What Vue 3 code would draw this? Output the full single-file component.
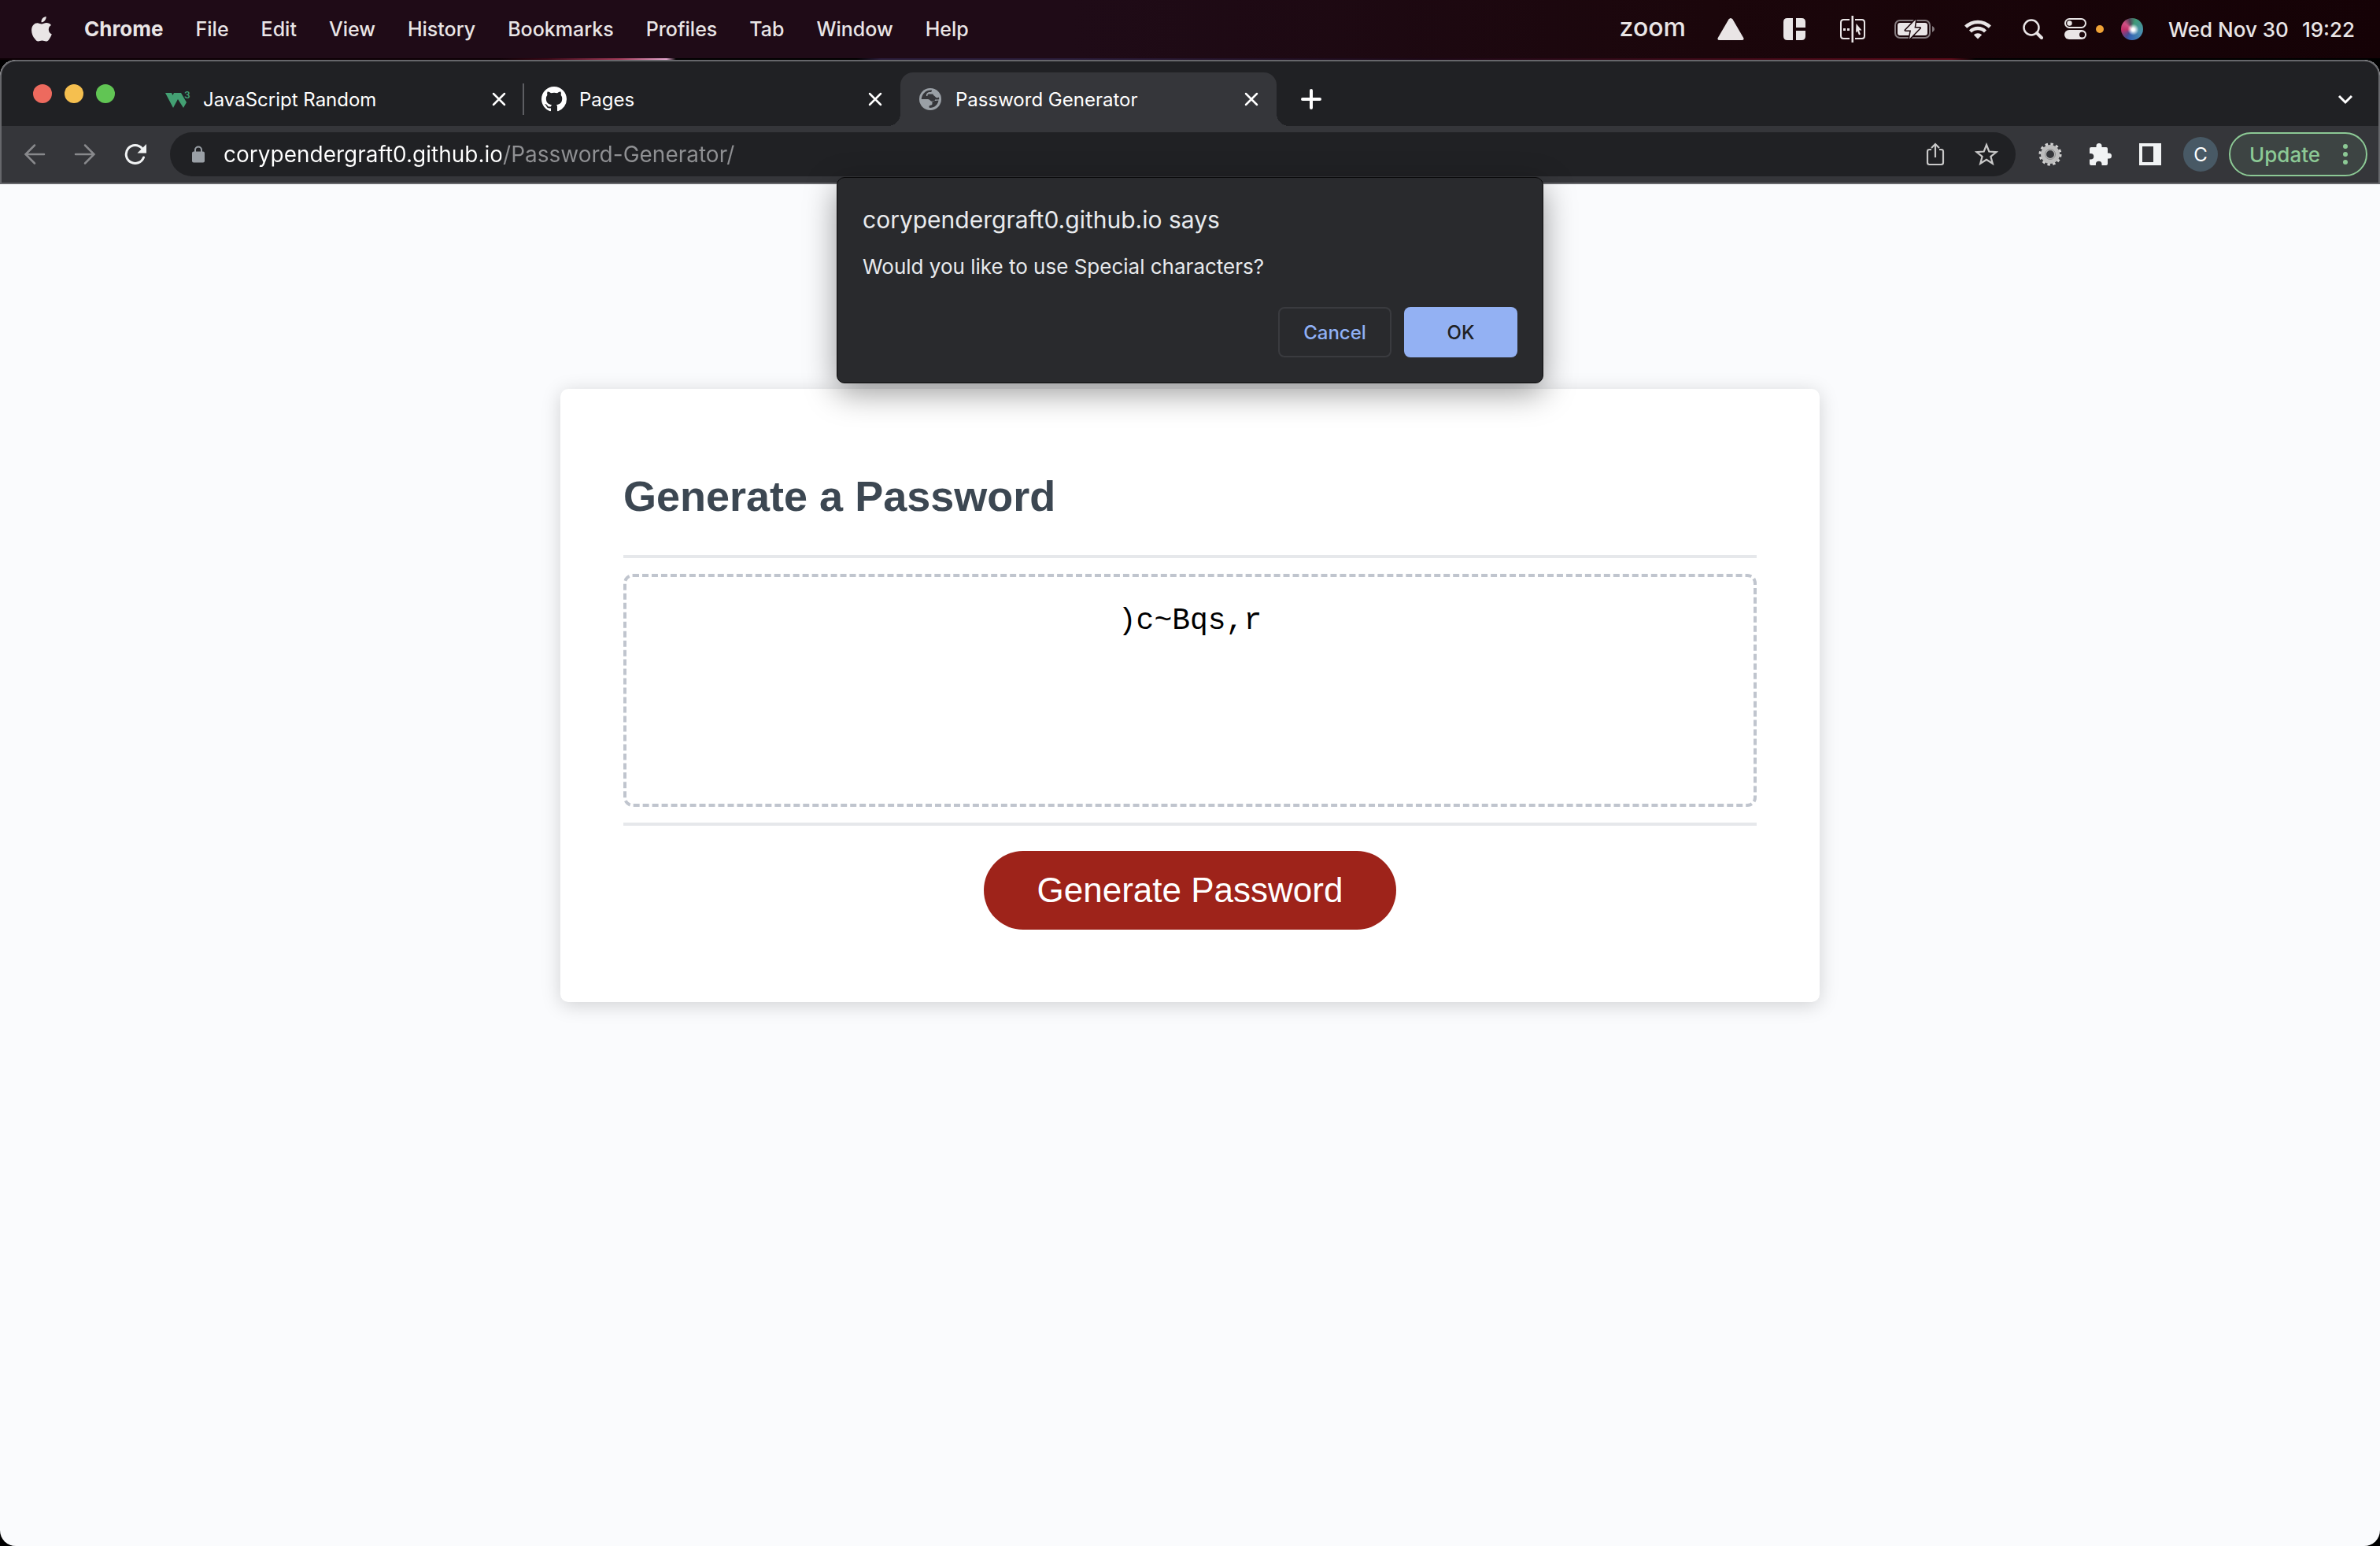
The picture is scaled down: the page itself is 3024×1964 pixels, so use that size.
<script setup>
import { ref } from 'vue'

const menus = ['File', 'Edit', 'View', 'History', 'Bookmarks', 'Profiles', 'Tab', 'Window', 'Help']
const tabs = [
  { id: 'w3', title: 'JavaScript Random' },
  { id: 'github', title: 'Pages' },
  { id: 'globe', title: 'Password Generator', active: true },
]
const address = ref('corypendergraft0.github.io/Password-Generator/')
const password = ref(')c~Bqs,r')
</script>

<template>
  <div class="desktop">
    <header class="menubar">
      <nav class="menus" aria-label="Menu bar">
        <button class="menu" aria-label="Apple menu">
          <svg class="apple" viewBox="0 0 26 32" width="26" height="32">
            <path d="M18.6 0c.3 2-.5 3.9-1.7 5.200-1.200 1.400-2.900 2.200-4.400 2-.2-2 .7-3.900 1.800-5.100C15.400.900 17.200.100 18.600 0zM25 10.900c-2.100 1.300-3.200 3.100-3.200 5.500 0 2.800 1.600 5 4 6-.8 2.300-1.900 4.500-3.400 6.500-1.200 1.700-2.400 2.700-4 2.700-1.700 0-2.700-1-4.900-1s-3.300 1-4.900 1c-1.700 0-2.900-1.200-4.200-3C1.800 25.600.1 21.500.1 17.500c0-5.900 3.600-9.300 7.300-9.300 2.100 0 3.900 1.300 5.600 1.300 1.600 0 3.500-1.400 6.100-1.400 2.300 0 4.400.9 5.900 2.800z" />
          </svg>
        </button>
        <button class="menu app">Chrome</button>
        <button v-for="m in menus" :key="m" class="menu">{{ m }}</button>
      </nav>
      <div class="status">
        <span class="zoom">zoom</span>
        <svg class="drive" viewBox="0 0 34 28" width="34" height="28"><path d="M14.500 1.500Q17-1.500 19.500 1.500L33.200 25Q34.500 28 31 28H3Q-.5 28 .8 25z" /></svg>
        <svg class="tiles" viewBox="0 0 28 28" width="28" height="28"><path d="M5 0h7v28H5q-5 0-5-5V5q0-5 5-5zM16 0h7q5 0 5 5v7H16zM16 16h12v7q0 5-5 5h-7z" /></svg>
        <svg class="split" viewBox="0 0 34 34" width="34" height="34">
          <path d="M13 5H5.500Q2 5 2 8.500v17Q2 29 5.500 29H13M20 5h8.500Q32 5 32 8.500v17Q32 29 28.500 29H20" fill="none" stroke="#e9e5e6" stroke-width="2" />
          <path d="M15.500 0h2.500v34h-2.500zM5 16h3v3H5zM10 16h3v3h-3zM21.500 10l7 8.500h-3.500l2 5-2 1-2-5-2 2z" />
        </svg>
        <svg class="battery" viewBox="0 0 52 26" width="52" height="26">
          <rect x="1" y="2" width="44" height="22" rx="6" fill="none" stroke="#857c7f" stroke-width="2" />
          <path d="M48 9q3 1.500 3 4t-3 4z" fill="#857c7f" />
          <rect x="4" y="5" width="38" height="16" rx="3" />
          <path d="M27 1 14 14.500h7L19 25.500 32.500 11.500H25.500z" stroke="#1a060b" stroke-width="3" stroke-linejoin="round" paint-order="stroke" />
        </svg>
        <svg class="wifi" viewBox="0 0 34 26" width="34" height="26">
          <g fill="none" stroke="#e9e5e6" stroke-width="4.500"><path d="M1.600 10.200a22 22 0 0 1 30.800 0" /><path d="M7.500 16a13.500 13.500 0 0 1 19 0" /></g>
          <path d="M17 25.500l-5.200-5.200a7.500 7.500 0 0 1 10.400 0z" />
        </svg>
        <svg class="search" viewBox="0 0 26 26" width="26" height="26"><g fill="none" stroke="#e9e5e6"><circle cx="11" cy="11" r="9.500" stroke-width="2.500" /><path d="M18 18l6 6" stroke-width="4" stroke-linecap="round" /></g></svg>
        <svg class="control" viewBox="0 0 28 28" width="28" height="28">
          <rect x="1" y="1" width="26" height="11" rx="5.500" fill="none" stroke="#e9e5e6" stroke-width="2" /><circle cx="6.500" cy="6.500" r="3.200" />
          <rect y="15" width="28" height="12" rx="6" /><circle cx="22.500" cy="21" r="3.500" fill="#1a060b" />
        </svg>
        <span class="dot"></span>
        <span class="siri"></span>
        <span class="clock"><span>Wed Nov 30</span><span>19:22</span></span>
      </div>
    </header>

    <div class="window">
      <div class="chrome">
        <div class="tabstrip">
          <div class="lights"><i class="red"></i><i class="yellow"></i><i class="green"></i></div>
          <div class="tabs">
            <div v-for="t in tabs" :key="t.id" class="tab" :class="[t.id, { active: t.active }]">
              <svg v-if="t.id === 'w3'" class="favicon" viewBox="0 0 32 32" width="32" height="32">
                <path d="M0 8h8l1.500 3L11 8h9l7 12-4 7-7-11-6 11z" fill="#43a073" />
                <text x="24" y="15" fill="#43a073" font-size="12" font-weight="600" font-family="Inter">3</text>
              </svg>
              <svg v-else-if="t.id === 'github'" class="favicon" viewBox="0 0 16 16" width="32" height="32">
                <path fill="#fff" d="M8 0C3.580 0 0 3.580 0 8c0 3.540 2.290 6.530 5.470 7.590.4.070.55-.17.55-.38 0-.19-.01-.82-.01-1.490-2.010.37-2.530-.49-2.690-.94-.09-.23-.48-.94-.82-1.130-.28-.15-.68-.52-.01-.53.63-.01 1.080.58 1.230.82.72 1.210 1.870.87 2.330.66.07-.52.28-.87.51-1.070-1.780-.2-3.640-.89-3.640-3.950 0-.87.31-1.590.82-2.150-.08-.2-.36-1.020.08-2.120 0 0 .67-.21 2.200.82.64-.18 1.320-.27 2-.27s1.360.09 2 .27c1.530-1.040 2.200-.82 2.200-.82.44 1.100.16 1.920.08 2.120.51.56.82 1.270.82 2.150 0 3.070-1.870 3.750-3.650 3.950.29.25.54.73.54 1.480 0 1.070-.01 1.930-.01 2.200 0 .21.15.46.55.38A8.010 8.010 0 0 0 16 8c0-4.420-3.580-8-8-8z" />
              </svg>
              <svg v-else class="favicon" viewBox="0 0 32 32" width="32" height="32">
                <circle cx="16" cy="16" r="14" fill="#9aa0a6" />
                <path d="M18 4.500C11 3.800 5.500 8.500 4.700 16H13c3 0 2.500 3 6 3 2 0 3-1 3-2.500h4.500c1-.5 1-2 0-3-1 1-3 1-4-.5-1.500-2-3-1.500-3-3.500H14c-1.500 0-1.500 1-1.500 2.500H11c-.5-3.500 2-5 4.500-5 2 0 2.500-.5 2.500-2.500zM26.500 17.500c-.8 5.500-5 9.500-11 9.500-1.500 0-1.500-2.500 0-3 2.500-.5 3-1 3-2.500v-3z" fill="#35363a" />
              </svg>
              <span class="title">{{ t.title }}</span>
              <button class="close" :aria-label="'Close ' + t.title">
                <svg viewBox="0 0 18 18" width="18" height="18"><path d="M2 2l14 14M16 2 2 16" stroke="#fff" stroke-width="2.500" stroke-linecap="round" /></svg>
              </button>
            </div>
          </div>
          <button class="icon add" aria-label="New tab"><svg viewBox="0 0 26 26" width="26" height="26"><path d="M13 2v22M2 13h22" stroke="#fff" stroke-width="4" stroke-linecap="round" /></svg></button>
          <button class="icon expand" aria-label="Search tabs"><svg viewBox="0 0 20 14" width="20" height="14"><path d="M2 3l8 8 8-8" fill="none" stroke="#fff" stroke-width="3" /></svg></button>
        </div>

        <div class="toolbar">
          <div class="nav">
            <button class="icon" aria-label="Back"><svg viewBox="0 0 28 28" width="28" height="28"><path d="M26 14H3M14 2.500 2.500 14 14 25.500" fill="none" stroke="#88898c" stroke-width="2.500" stroke-linecap="round" /></svg></button>
            <button class="icon" aria-label="Forward"><svg viewBox="0 0 28 28" width="28" height="28"><path d="M2 14h23M14 2.500 25.500 14 14 25.500" fill="none" stroke="#88898c" stroke-width="2.500" stroke-linecap="round" /></svg></button>
            <button class="icon" aria-label="Reload"><svg viewBox="0 0 28 28" width="28" height="28"><path d="M24.500 18A11.500 11.500 0 1 1 22.500 6.500" fill="none" stroke="#f1f3f4" stroke-width="3" stroke-linecap="round" /><path d="M28 1v11.500H16.500z" fill="#f1f3f4" /></svg></button>
          </div>
          <div class="omnibox">
            <svg class="lock" viewBox="0 0 16 22" width="16" height="22"><path d="M4 8V5.500a4 4 0 0 1 8 0V8" fill="none" stroke="#9aa0a6" stroke-width="2" /><rect y="7.500" width="16" height="14" rx="2" fill="#9aa0a6" /></svg>
            <input v-model="address" class="address" type="text" aria-label="Address" spellcheck="false" />
            <button class="icon" aria-label="Share"><svg viewBox="0 0 24 30" width="24" height="30"><path d="M7 9H4.500Q2 9 2 11.500v14Q2 28 4.500 28h15q2.500 0 2.500-2.500v-14Q22 9 19.500 9H17M12 19V3M7 7l5-5 5 5" fill="none" stroke="#c8c8c8" stroke-width="2.200" /></svg></button>
            <button class="icon" aria-label="Bookmark"><svg viewBox="0 0 30 30" width="30" height="30"><path d="M15 3l3.300 8.500 9.200.6-7.100 5.700 2.400 9L15 21.800l-7.800 5 2.400-9-7.100-5.700 9.200-.6z" fill="none" stroke="#c8c8c8" stroke-width="2.200" /></svg></button>
          </div>
          <div class="actions">
            <button class="icon" aria-label="Extension"><svg viewBox="0 0 30 30" width="30" height="30"><g fill="none"><circle cx="15" cy="15" r="12.500" stroke="#d2d2d2" stroke-width="4" stroke-dasharray="3.300 3.245" /><circle cx="15" cy="15" r="8.500" stroke="#bdbdbd" stroke-width="7" /><circle cx="15" cy="15" r="6.500" stroke="#8b8b8b" stroke-width="1" /></g></svg></button>
            <button class="icon" aria-label="Extensions"><svg viewBox="0 0 30 30" width="30" height="30"><path d="M3 6h6.500V4.500a3.500 3.500 0 0 1 7 0V6H22q2 0 2 2v5.500h1.500a3.500 3.500 0 0 1 0 7H24V27q0 2-2 2h-5.500v-1.500a3.800 3.800 0 0 0-7.600 0V29H3q-2 0-2-2v-5.500h1.500a3.800 3.800 0 0 0 0-7.600H1V8q0-2 2-2z" fill="#f1f3f4" /></svg></button>
            <button class="icon" aria-label="Side panel"><svg viewBox="0 0 28 28" width="28" height="28"><path d="M0 0h28v28H0zM4 4v20h14V4z" fill="#f1f3f4" fill-rule="evenodd" /></svg></button>
            <button class="avatar" aria-label="Profile">C</button>
            <button class="update">Update<svg viewBox="0 0 6 26" width="6" height="26"><circle cx="3" cy="3" r="3" /><circle cx="3" cy="13" r="3" /><circle cx="3" cy="23" r="3" /></svg></button>
          </div>
        </div>
      </div>

      <main class="page">
        <section class="card">
          <div class="card-header"><h2>Generate a Password</h2></div>
          <textarea v-model="password" class="result" readonly aria-label="Your Secure Password"></textarea>
          <div class="card-footer"><button class="generate">Generate Password</button></div>
        </section>
      </main>

      <div class="dialog" role="alertdialog" aria-labelledby="dialog-title">
        <h1 id="dialog-title">corypendergraft0.github.io says</h1>
        <p>Would you like to use Special characters?</p>
        <div class="choices">
          <button class="cancel">Cancel</button>
          <button class="ok">OK</button>
        </div>
      </div>
    </div>
  </div>
</template>

<style>
body { margin: 0; background: #000; }
</style>

<style scoped>
* { box-sizing: border-box; }
button { border: 0; padding: 0; margin: 0; background: none; color: inherit; font: inherit; }
svg { display: block; flex: none; }
.desktop { min-height: 100vh; display: flex; flex-direction: column; background: #000; font-family: Inter, "Liberation Sans", sans-serif; }

.menubar { height: 76px; flex: none; display: flex; justify-content: space-between; align-items: center; padding: 0 32px 2px 40px; color: #e9e5e6; font-size: 25px; font-weight: 500;
  background:
    linear-gradient(90deg, #0d0005 0 21%, #3a0715 23%, #a33a58 26%, #e8a8d0 28%, #000 28.400% 36%, #2a1c3a 37% 45%, #1c0716 60%, #5a0a18 82%, #000 83%) bottom / 100% 2px no-repeat,
    linear-gradient(90deg, #1f0b17 0 45%, #1b060b 72%, #150206); }
.menubar svg { fill: #e9e5e6; }
.menus { display: flex; align-items: center; gap: 41px; }
.menu { white-space: nowrap; line-height: 32px; }
.app { font-size: 26px; font-weight: 700; }
.status { display: flex; align-items: center; }
.zoom { font-size: 32px; font-weight: 500; line-height: 32px; margin-right: 40px; padding-bottom: 4px; }
.drive { margin-right: 50px; }
.tiles { margin-right: 43px; }
.split { margin-right: 36px; }
.battery { margin-right: 37px; }
.wifi { margin-right: 40px; }
.search { margin-right: 27px; }
.control { margin-right: 12px; }
.dot { width: 10px; height: 10px; border-radius: 50%; background: #f0a336; margin-right: 22px; }
.siri { width: 28px; height: 28px; border-radius: 50%; margin-right: 32px;
  background: radial-gradient(circle at 55% 52%, #fff 0 8%, transparent 34%), conic-gradient(from 20deg, #3f9a76, #4a8fae 25%, #3565b4 48%, #4a4a90 55%, #c03068 68%, #d05084 80%, #54445a 90%, #3f9a76); }
.clock { display: flex; gap: 17px; font-size: 26px; }

.window { flex: 1; position: relative; display: flex; flex-direction: column; background: #fafbfd; border-radius: 20px; overflow: hidden; }
.chrome { border: 2px solid #66676b; border-radius: 20px 20px 0 0; background: #202124; color: #fff; overflow: hidden; }
.tabstrip { height: 82px; display: flex; align-items: flex-end; padding: 0 14px 0 40px; }
.lights { display: flex; gap: 16px; margin-right: 42px; padding-bottom: 29px; }
.lights i { width: 24px; height: 24px; border-radius: 50%; }
.red { background: #ed6a5e; }
.yellow { background: #f5bf4f; }
.green { background: #61c554; }
.tabs { display: flex; }
.tab { position: relative; width: 478px; height: 68px; display: flex; align-items: center; padding: 0 20px 0 22px; font-size: 24px; }
.tab.w3::after { content: ""; position: absolute; right: 0; top: 14px; width: 2px; height: 40px; background: #5d5e62; }
.favicon { margin-right: 16px; }
.title { flex: 1; white-space: nowrap; overflow: hidden; }
.close { padding: 3px; }
.active { background: #35363a; border-radius: 16px 16px 0 0; }
.active::before, .active::after { content: ""; position: absolute; bottom: 0; width: 16px; height: 16px; }
.active::before { right: 100%; background: radial-gradient(circle at 0 0, transparent 16px, #35363a 16px); }
.active::after { left: 100%; background: radial-gradient(circle at 100% 0, transparent 16px, #35363a 16px); }
.icon { display: flex; align-items: center; justify-content: center; }
.tabstrip .icon { height: 68px; width: 56px; }
.add { margin-left: 16px; }
.expand { margin-left: auto; }

.toolbar { height: 72px; display: flex; align-items: center; background: #35363a; padding: 0 14px 0 28px; }
.nav { display: flex; gap: 36px; margin-right: 30px; }
.omnibox { flex: 1; height: 56px; border-radius: 28px; background: #202124; display: flex; align-items: center; gap: 38px; padding: 0 22px 0 28px; }
.lock { margin-right: -14px; }
.address { flex: 1; min-width: 0; height: 48px; border: 0; outline: 0; padding: 0; font: 400 28px Inter, "Liberation Sans", sans-serif; color: transparent;
  background: linear-gradient(90deg, #fff 353px, #8f9093 353px); -webkit-background-clip: text; background-clip: text; }
.actions { display: flex; align-items: center; gap: 34px; margin-left: 29px; }
.avatar { width: 44px; height: 44px; border-radius: 50%; background: #485965; font-size: 24px; margin-left: -6px; margin-right: -20px; }
.update { width: 176px; height: 56px; border: 2px solid #8cc995; border-radius: 28px; background: #3d4443; color: #8cc995; font-size: 26px; font-weight: 500; display: flex; align-items: center; justify-content: space-between; padding: 0 23px 0 24px; }
.update svg { fill: #8cc995; }

.page { flex: 1; padding: 260px 40px; display: flex; justify-content: center; align-items: flex-start; font-family: "Liberation Sans", Arial, sans-serif; }
.card { flex: 0 1 1600px; background: #fff; border-radius: 10px; padding: 80px; box-shadow: 0 4px 24px rgba(0, 0, 0, 0.17); }
.card-header { padding: 24px 0 43px; border-bottom: 4px solid #e6e8eb; }
h2 { margin: 0; font-size: 54px; line-height: 64px; color: #3c4752; }
.result { display: block; width: 100%; height: 296px; margin: 20px 0; padding: 34px 20px 20px; border: 4px dashed #c0c5ce; border-radius: 12px; background: #fff; color: #000; resize: none; outline: 0; overflow: hidden; text-align: center; font: 38px/44px "Liberation Mono", "Courier New", monospace; }
.card-footer { display: flex; justify-content: center; padding: 32px 0 12px; border-top: 4px solid #e6e8eb; }
.generate { width: 524px; height: 100px; border-radius: 50px; background: #9e231a; color: #fff; font-size: 44px; }

.dialog { position: absolute; top: 149px; left: 50%; transform: translateX(-50%); width: 898px; height: 262px; padding: 35px 32px 32px; border: 1px solid #0b0b0c; border-radius: 10px; background: #292a2d; color: #e8eaed; box-shadow: 0 12px 40px rgba(0, 0, 0, 0.4); display: flex; flex-direction: column; }
h1 { margin: 0 0 22px; font-size: 30px; line-height: 36px; font-weight: 400; }
.dialog p { margin: 0; font-size: 26px; line-height: 40px; }
.choices { margin-top: auto; display: flex; justify-content: flex-end; gap: 16px; font-size: 24px; font-weight: 500; }
.choices button { width: 144px; height: 64px; border-radius: 8px; }
.cancel { border: 2px solid #3a3b3f; color: #8fb0f5; }
.ok { background: #93b1f3; color: #202124; }
</style>
